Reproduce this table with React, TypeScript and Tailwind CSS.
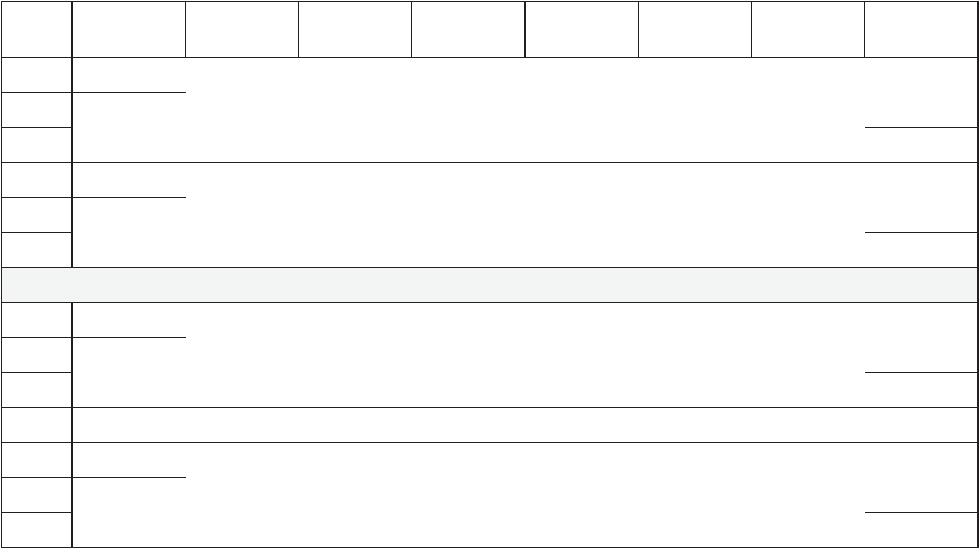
const line = 'border-[#231f20]';

function HeaderRow() {
  const cols = [0, 1, 2, 3, 4, 5, 6, 7];
  return (
    <div className={`flex h-[56px] border-b ${line}`}>
      <div className={`w-[71px] border-r-2 ${line}`} />
      {cols.map((c) => (
        <div
          key={c}
          className={
            c === 7
              ? 'w-[112px]'
              : c === 3
                ? `w-[114px] border-r-2 ${line}`
                : `w-[113px] border-r ${line}`
          }
        />
      ))}
    </div>
  );
}

// a block of rows: left label cells, and one merged cell on the right
function Block({ rows, last = false }: { rows: number; last?: boolean }) {
  const idx = Array.from({ length: rows }, (_, i) => i);
  return (
    <div className={last ? 'flex' : `flex border-b ${line}`}>
      <div className={`flex w-[71px] flex-col border-r-2 ${line}`}>
        {idx.map((i) => (
          <div key={i} className={i < rows - 1 ? `h-[35px] border-b ${line}` : 'h-[34px]'} />
        ))}
      </div>
      <div className="flex flex-1 flex-col">
        {rows === 3 ? (
          <>
            <div className="h-[35px]">
              <div className={`h-full w-[113px] border-b ${line}`} />
            </div>
            <div className="flex h-[35px] justify-end">
              <div className={`h-full w-[112px] border-b ${line}`} />
            </div>
            <div className="h-[34px]" />
          </>
        ) : (
          <div className="h-[34px]" />
        )}
      </div>
    </div>
  );
}

function GrayRow() {
  return <div className={`h-[35px] border-b bg-[#f3f4f4] ${line}`} />;
}

export default function App() {
  return (
    <div className="h-[549px] w-[979px] overflow-hidden bg-white pt-px">
      <div className={`ml-px w-[978px] border-t border-b border-l border-r-2 ${line}`}>
        <HeaderRow />
        <Block rows={3} />
        <Block rows={3} />
        <GrayRow />
        <Block rows={3} />
        <Block rows={1} />
        <Block rows={3} last />
      </div>
    </div>
  );
}
